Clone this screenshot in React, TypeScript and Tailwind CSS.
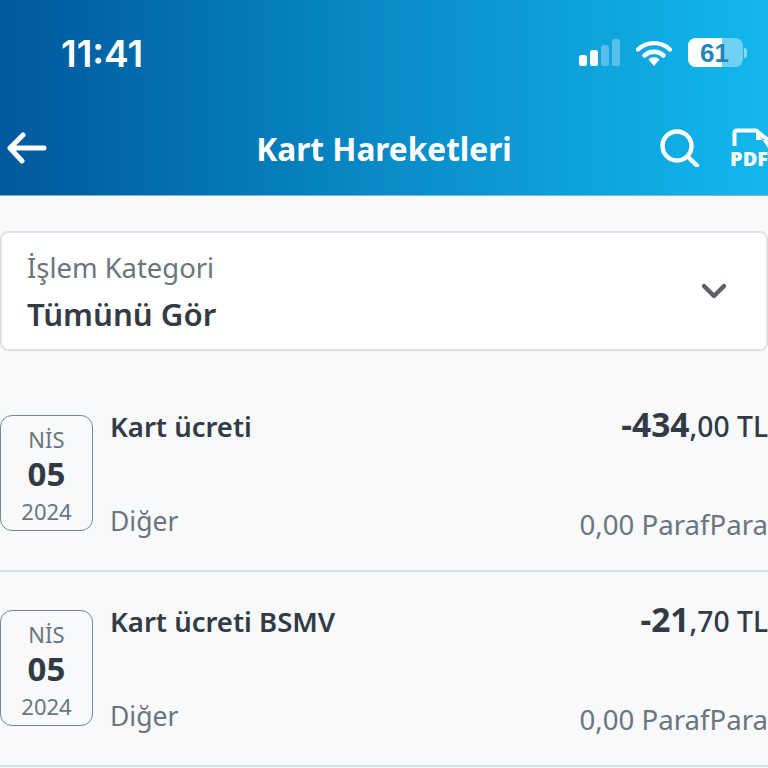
import { ChevronDown } from 'lucide-react';

const rows = [
  { title: 'Kart ücreti', whole: '-434', cents: ',00 TL' },
  { title: 'Kart ücreti BSMV', whole: '-21', cents: ',70 TL' },
];

const StatusIcons = () => (
  <div className="flex items-center">
    {/* signal */}
    <svg width="42" height="28" viewBox="0 0 42 28" className="mr-[16px]">
      <rect x="1" y="16" width="8" height="11" rx="2.5" fill="#fff" />
      <rect x="12" y="11" width="8" height="16" rx="2.5" fill="#fff" />
      <rect x="23" y="6" width="8" height="21" rx="2.5" fill="#fff" fillOpacity="0.3" />
      <rect x="34" y="0" width="8" height="27" rx="2.5" fill="#fff" fillOpacity="0.3" />
    </svg>
    {/* wifi */}
    <svg width="36" height="28" viewBox="0 0 36 28" className="mr-[16px]">
      <path d="M2 10.5 C 11 2, 25 2, 34 10.5" fill="none" stroke="#fff" strokeWidth="4.4" strokeLinecap="round" />
      <path d="M8.5 16.5 C 14 11.5, 22 11.5, 27.5 16.5" fill="none" stroke="#fff" strokeWidth="4.4" strokeLinecap="round" />
      <path d="M12.5 20.5 C 15.5 17.5, 20.5 17.5, 23.5 20.5 L18 27 Z" fill="#fff" />
    </svg>
    {/* battery */}
    <div className="relative flex h-[29px] w-[55px] items-center overflow-hidden rounded-[8px] bg-white/40 pl-[12px]">
      <div className="absolute inset-y-0 left-0 w-[34px] bg-white" />
      <span className="relative font-['Liberation_Sans',sans-serif] text-[26px] font-bold leading-none text-[#1f86bd]">61</span>
    </div>
    <div className="ml-[1px] h-[10px] w-[3px] rounded-r-full bg-white/50" />
  </div>
);

const Row = ({ title, whole, cents }: { title: string; whole: string; cents: string }) => (
  <div className="flex border-b-2 border-[#dcdfe2] pb-[39px] pt-[38px]">
    <div className="flex h-[116px] w-[93px] shrink-0 flex-col items-center rounded-[12px] border border-[#7f858b] pt-[8px] text-[#6c757d]">
      <span className="text-[22px] leading-[31px]">NİS</span>
      <span className="text-[33px] font-bold leading-[38px] text-[#323b45]">05</span>
      <span className="mt-[3px] text-[22px] leading-[30px]">2024</span>
    </div>
    <div className="ml-[17px] flex h-[116px] min-w-0 flex-1 flex-col">
      <div className="-mt-[3px] flex h-[24px] items-baseline justify-between whitespace-nowrap leading-[24px]">
        <span className="text-[27.5px] font-semibold text-[#323b45]">{title}</span>
        <span className="text-[28.3px] font-medium text-[#323b45]">
          <span className="text-[33.5px] font-bold">{whole}</span>
          {cents}
        </span>
      </div>
      <div className="mt-[73px] flex h-[24px] items-start justify-between whitespace-nowrap leading-[24px] text-[#6c757d]">
        <span className="text-[26.5px]">Diğer</span>
        <span className="mt-[3px] text-[27.6px]">0,00 ParafPara</span>
      </div>
    </div>
  </div>
);

export default function App() {
  return (
    <div className="h-[768px] w-[768px] overflow-hidden bg-[#f7f9fb] font-['Noto_Sans',sans-serif]">
      <header className="h-[196px] border-b border-[#7fb4d3] bg-gradient-to-r from-[#00589c] via-[#0a8bc8] to-[#13b7ee] text-white">
        <div className="flex h-[110px] items-center justify-between pb-[5px] pl-[61px] pr-[21px]">
          <span className="mt-[3px] font-['Inter',sans-serif] text-[37px] font-semibold">11:41</span>
          <StatusIcons />
        </div>
        <div className="grid h-[76px] grid-cols-[1fr_auto_1fr] items-center">
          <svg width="40" height="32" viewBox="0 0 40 32" className="ml-[7px]" fill="none" stroke="#fff" strokeWidth="5" strokeLinecap="round" strokeLinejoin="round">
            <path d="M3 16 H37 M16 3 L3 16 L15 29" />
          </svg>
          <span className="pt-[2px] text-[31.6px] font-bold">Kart Hareketleri</span>
          <div className="flex w-full items-center justify-end overflow-hidden">
            <div className="flex w-[108px] shrink-0 items-center">
              <svg width="40" height="38" viewBox="0 0 40 38" fill="none" stroke="#fff" strokeWidth="4.4" strokeLinecap="round" className="shrink-0">
                <circle cx="17" cy="17" r="14.5" />
                <path d="M27.5 27.5 L37 36.5" />
              </svg>
              <div className="relative ml-[30px] h-[40px] w-[38px] shrink-0">
                <svg width="38" height="24" viewBox="0 0 38 24" className="absolute left-0 top-0" fill="none">
                  <path d="M4.5 18 V5 Q4.5 2.5 7 2.5 H26 L38 12" stroke="#fff" strokeWidth="4" />
                  <path d="M26 2 L26 12 H38 L38 20 L26 2 Z" fill="#fff" />
                </svg>
                <span className="absolute left-0 top-[19px] text-[20px] font-black leading-[24px]">PDF</span>
              </div>
            </div>
          </div>
        </div>
      </header>

      <div className="pt-[35px]">
        <div className="flex h-[120px] items-center justify-between rounded-[8px] border-2 border-[#dfe1e4] bg-white pl-[25px] pr-[32px]">
          <div className="flex flex-col pt-[2px]">
            <span className="text-[27.4px] leading-[38px] text-[#6c757d]">İşlem Kategori</span>
            <span className="mt-[6px] text-[31.2px] font-semibold leading-[42px] text-[#323b45]">Tümünü Gör</span>
          </div>
          <ChevronDown size={40} strokeWidth={2.6} className="text-[#5a6066]" />
        </div>
      </div>

      <div className="pt-[26px]">
        {rows.map((r) => (
          <Row key={r.title} {...r} />
        ))}
      </div>
    </div>
  );
}
